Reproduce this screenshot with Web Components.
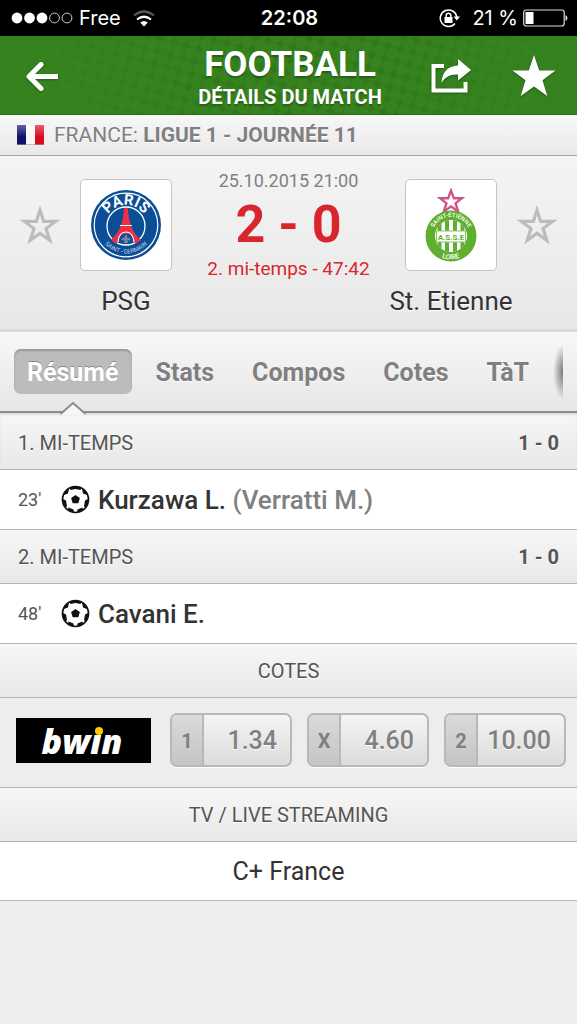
<!DOCTYPE html>
<html lang="fr">
<head>
<meta charset="UTF-8">
<meta name="viewport" content="width=device-width, initial-scale=1">
<title>Détails du match</title>
<style>
    body {
        margin: 0;
        min-height: 100vh;
        background: #eeeeee;
        color: #333333;
        font-family: Roboto, "Liberation Sans", sans-serif;
    }
</style>
</head>
<body>
<match-page></match-page>

<script>
// Styles communs à tous les composants
const base = `
    *, *::before, *::after { box-sizing: border-box; }
    :host { display: block; box-sizing: border-box; }
    button { margin: 0; padding: 0; border: 0; background: none; color: inherit; font: inherit; cursor: pointer; }
    svg { display: block; }
`;

class BaseElement extends HTMLElement {
    constructor() {
        super();
        this.attachShadow({ mode: 'open' });
    }

    connectedCallback() {
        this.shadowRoot.innerHTML = `<style>${base}${this.styles()}</style>${this.template()}`;
    }

    styles() {
        return '';
    }

    template() {
        return '<slot></slot>';
    }
}

class StatusBar extends BaseElement {
    styles() {
        return `
            :host {
                display: grid;
                grid-template-columns: 1fr auto 1fr;
                align-items: center;
                height: 36px;
                padding: 0 9px 0 11px;
                background: #000;
                color: #fff;
                font-family: Inter, Roboto, sans-serif;
                font-size: 20px;
                line-height: 36px;
            }
            .left, .right { display: flex; align-items: center; gap: 6px; }
            .right { justify-content: flex-end; gap: 5px; }
            .left svg:last-child { margin-left: 6px; }
            .right span { margin-left: 6px; white-space: nowrap; }
            time { font-weight: 600; }
        `;
    }

    template() {
        return `
            <div class="left">
                <svg width="62" height="12" viewBox="0 0 62 12" fill="#fff" aria-hidden="true">
                    <circle cx="6" cy="6" r="5.4"/><circle cx="18.5" cy="6" r="5.4"/><circle cx="31" cy="6" r="5.4"/>
                    <g fill="none" stroke="#ccc"><circle cx="43.5" cy="6" r="4.9"/><circle cx="56" cy="6" r="4.9"/></g>
                </svg>
                <span>Free</span>
                <svg width="22" height="17" viewBox="0 0 22 17" fill="none" stroke="#fff" stroke-width="2.2" aria-hidden="true">
                    <path d="M1 5.500Q11-2.500 21 5.500" stroke="#555"/>
                    <path d="M4 9.500Q11 4 18 9.500"/>
                    <path d="M7.200 12.600Q11 9.500 14.800 12.600L11 16.500Z" fill="#fff" stroke="none"/>
                </svg>
            </div>
            <time>22:08</time>
            <div class="right">
                <svg width="22" height="20" viewBox="0 0 22 20" fill="none" stroke="#fff" stroke-width="1.5" aria-hidden="true">
                    <path d="M16 15.500A8.300 8.300 0 1 1 17.800 9"/>
                    <path d="M14.500 8.500H21L17.800 12.500Z" fill="#fff" stroke="none"/>
                    <rect x="5.500" y="9" width="8" height="6" fill="#fff" stroke="none"/>
                    <path d="M7.200 9V7.500a2.300 2.300 0 0 1 4.600 0V9"/>
                </svg>
                <span>21 %</span>
                <svg width="45" height="18" viewBox="0 0 45 18" aria-hidden="true">
                    <rect x=".7" y="1" width="40.5" height="16" rx="2.5" fill="none" stroke="#ddd" stroke-width="1.2"/>
                    <rect x="2.5" y="3" width="8" height="12" fill="#fff"/>
                    <path d="M42.500 6q2 1 2 3t-2 3z" fill="#ddd"/>
                </svg>
            </div>
        `;
    }
}

class AppHeader extends BaseElement {
    styles() {
        return `
            :host {
                display: grid;
                grid-template-columns: 1fr auto 1fr;
                align-items: center;
                height: 79px;
                padding: 2px 21px 0 24px;
                background: #36831f;
                border-bottom: 1px solid #2b6c18;
                color: #fff;
                overflow: hidden;
                position: relative;
            }
            .dots { position: absolute; inset: 0; width: 100%; height: 100%; }
            .back, .title, .actions { position: relative; }
            .back { justify-self: start; }
            .title { text-align: center; text-shadow: 0 2px 1px rgba(0,0,0,0.25); }
            h1 { margin: 0; font-size: 35px; line-height: 41px; font-weight: 700; }
            h2 { margin: 0; font-size: 20px; line-height: 24px; font-weight: 700; }
            .actions { display: flex; justify-content: flex-end; align-items: center; gap: 40px; }
            .back svg, .actions svg { filter: drop-shadow(0 1px 1px rgba(0,0,0,0.3)); }
        `;
    }

    template() {
        return `
            <svg class="dots" aria-hidden="true">
                <defs>
                    <pattern id="halftone" width="13" height="13" patternUnits="userSpaceOnUse" patternTransform="rotate(15)">
                        <rect width="13" height="13" fill="#2a6d17"/>
                        <circle cx="6.5" cy="6.5" r="6.3" fill="#36831f"/>
                    </pattern>
                    <linearGradient id="fade">
                        <stop offset="0" stop-color="#fff" stop-opacity="0"/>
                        <stop offset=".42" stop-color="#fff" stop-opacity=".5"/>
                        <stop offset=".65" stop-color="#fff" stop-opacity=".5"/>
                        <stop offset="1" stop-color="#fff" stop-opacity="0"/>
                    </linearGradient>
                    <mask id="m"><rect width="100%" height="100%" fill="url(#fade)"/></mask>
                </defs>
                <rect width="100%" height="100%" fill="url(#halftone)" mask="url(#m)"/>
            </svg>
            <button class="back" aria-label="Retour">
                <svg width="36" height="32" viewBox="0 0 36 32" fill="none" stroke="#fff" stroke-width="5" stroke-linecap="round" stroke-linejoin="round">
                    <path d="M17 4.500L5 16.500L17 28.500"/><path d="M6 16.500H34" stroke-linecap="butt"/>
                </svg>
            </button>
            <div class="title">
                <h1>FOOTBALL</h1>
                <h2>DÉTAILS DU MATCH</h2>
            </div>
            <div class="actions">
                <button aria-label="Partager">
                    <svg width="42" height="36" viewBox="0 0 42 36">
                        <path d="M14 8H3.500V32.500H35.500V24" fill="none" stroke="#fff" stroke-width="4"/>
                        <path d="M28 1L41 12L28 22.500V16.500C20 16 15 19 11.500 25C12 14 18 8 28 7.500Z" fill="#fff"/>
                    </svg>
                </button>
                <button aria-label="Favori">
                    <svg width="44" height="42" viewBox="0 0 44 42" fill="#fff">
                        <path d="M22 0L27.200 15.500H43.500L30.500 25.200L35.300 41L22 31.500L8.700 41L13.500 25.200L.5 15.500H16.800Z"/>
                    </svg>
                </button>
            </div>
        `;
    }
}

class LeagueBar extends BaseElement {
    styles() {
        return `
            :host {
                display: flex;
                align-items: center;
                gap: 10px;
                height: 41px;
                padding: 0 17px;
                background: linear-gradient(#f7f7f7, #e9e9e9);
                border-bottom: 1px solid #aaaaaa;
                color: #808080;
                font-size: 21px;
                line-height: 24px;
                text-shadow: 0 1px 0 #fff;
            }
        `;
    }

    template() {
        return `
            <svg width="27" height="20" viewBox="0 0 27 20" aria-hidden="true">
                <defs><linearGradient id="g" x2="0" y2="1"><stop stop-color="#fff" stop-opacity=".35"/><stop offset=".6" stop-color="#fff" stop-opacity="0"/></linearGradient></defs>
                <rect width="9" height="20" fill="#10106e"/><rect x="9" width="9" height="20" fill="#f8f8f8"/>
                <rect x="18" width="9" height="20" fill="#d80a20"/><rect width="27" height="20" fill="url(#g)"/>
                <path d="M0 19.500H27" stroke="#999" stroke-opacity=".6"/>
            </svg>
            <span><slot></slot></span>
        `;
    }
}

class FavoriteStar extends BaseElement {
    styles() {
        return `
            :host { display: flex; align-items: center; justify-content: center; height: 92px; }
        `;
    }

    template() {
        return `
            <button aria-label="Ajouter aux favoris">
                <svg width="42" height="42" viewBox="0 0 42 42" fill="#bcbcbc" fill-rule="evenodd">
                    <path d="M21 1L25.800 15.700H41.500L28.900 25L33.800 40.500L21 31.200L8.200 40.500L13.100 25L.5 15.700H16.200ZM21 11L18.600 19H10L17 24L14.200 32.200L21 27.200L27.800 32.200L25 24L32 19H23.400Z"/>
                </svg>
            </button>
        `;
    }
}

class TeamCard extends BaseElement {
    styles() {
        return `
            :host { display: flex; flex-direction: column; align-items: center; gap: 14px; }
            .logo {
                display: flex;
                align-items: center;
                justify-content: center;
                width: 92px;
                height: 92px;
                background: #fff;
                border: 1px solid #c4c4c4;
                border-radius: 5px;
            }
            .name { font-size: 26px; line-height: 32px; white-space: nowrap; text-shadow: 0 1px 0 #fff; }
        `;
    }

    template() {
        return `
            <div class="logo"><slot name="logo"></slot></div>
            <div class="name"><slot></slot></div>
        `;
    }
}

class PsgLogo extends BaseElement {
    template() {
        return `
            <svg width="72" height="72" viewBox="0 0 72 72" font-family="Roboto, sans-serif">
                <defs>
                    <path id="top" d="M14 38A22 22 0 0 1 58 38"/>
                    <path id="bottom" d="M7.500 36A28.500 28.500 0 0 0 64.500 36"/>
                </defs>
                <circle cx="36" cy="36" r="35" fill="#0b4e96"/>
                <circle cx="36" cy="36" r="31.8" fill="none" stroke="#fff" stroke-width="1.2"/>
                <circle cx="36" cy="37" r="19" fill="#0b4e96" stroke="#fff" stroke-width="1.3"/>
                <path d="M34 19H38C38.500 34 43 45 51 51Q48 53.500 45 55Q44 44.500 36 44.500Q28 44.500 27 55Q23 53 21 50.500C29 44 33.500 34 34 19Z" fill="#ee3044"/>
                <path d="M30 36.500H42" stroke="#fff" stroke-width="1"/>
                <path d="M28 53Q29 43 36 43Q43 43 44 53" fill="none" stroke="#fff" stroke-width="1.2"/>
                <path d="M36 45.500Q38.500 48 37 50Q39 47.500 40.500 50Q40.500 52 37 51.500L38.500 54H33.500L35 51.500Q31.500 52 31.500 50Q33 47.500 35 50Q33.500 48 36 45.500Z" fill="#7a86a0"/>
                <text fill="#fff" font-size="15" font-weight="700" text-anchor="middle"><textPath href="#top" startOffset="50%">PARIS</textPath></text>
                <text fill="#c8d8ee" font-size="6" text-anchor="middle"><textPath href="#bottom" startOffset="50%">SAINT - GERMAIN</textPath></text>
            </svg>
        `;
    }
}

class AsseLogo extends BaseElement {
    template() {
        return `
            <svg width="54" height="74" viewBox="0 0 54 74" font-family="Roboto, sans-serif">
                <defs>
                    <path id="top" d="M8 48A19 19 0 0 1 46 48"/>
                    <path id="bottom" d="M3.500 48A23.500 23.500 0 0 0 50.500 48"/>
                    <clipPath id="c"><circle cx="27" cy="48" r="16"/></clipPath>
                </defs>
                <path d="M27 3.500L29.600 10.500H37L31.200 15.200L33.500 22.500L27 18L20.500 22.500L22.800 15.200L17 10.500H24.400Z" fill="#fff" stroke="#8f5aa6" stroke-width="3"/>
                <path d="M27 3.500L29.600 10.500H37L31.200 15.200L33.500 22.500L27 18L20.500 22.500L22.800 15.200L17 10.500H24.400Z" fill="#fff" stroke="#e8507c" stroke-width="1.8"/>
                <circle cx="27" cy="48" r="25.5" fill="#5fae2e"/>
                <circle cx="27" cy="48" r="16" fill="#fff"/>
                <path d="M15.500 30V66M23 30V66M31 30V66M38.500 30V66" stroke="#5fae2e" stroke-width="4" clip-path="url(#c)"/>
                <rect x="12.5" y="43" width="29" height="11" fill="#fff" stroke="#8cc567"/>
                <text x="27" y="51.5" fill="#5fae2e" font-size="8" font-weight="700" text-anchor="middle">A.S.S.E</text>
                <text fill="#fff" font-size="6" font-weight="500" text-anchor="middle"><textPath href="#top" startOffset="50%">SAINT-ETIENNE</textPath></text>
                <text fill="#fff" font-size="7" font-weight="500" text-anchor="middle"><textPath href="#bottom" startOffset="50%">LOIRE</textPath></text>
            </svg>
        `;
    }
}

class MatchSummary extends BaseElement {
    styles() {
        return `
            :host {
                display: grid;
                grid-template-columns: 80px 92px 1fr 92px 80px;
                align-items: start;
                height: 176px;
                padding-top: 23px;
                background: linear-gradient(#f4f4f4, #e8e8e8);
                border-bottom: 3px solid #dadada;
            }
            .center { text-align: center; margin-top: -10px; color: #d9262e; font-size: 19px; line-height: 24px; }
            .date { color: #808080; font-size: 18px; }
            .score { font-size: 52px; line-height: 64px; font-weight: 700; }
        `;
    }

    template() {
        return `
            <favorite-star></favorite-star>
            <team-card><psg-logo slot="logo"></psg-logo>PSG</team-card>
            <div class="center">
                <div class="date">25.10.2015 21:00</div>
                <div class="score">2 - 0</div>
                <div>2. mi-temps - 47:42</div>
            </div>
            <team-card><asse-logo slot="logo"></asse-logo>St. Etienne</team-card>
            <favorite-star></favorite-star>
        `;
    }
}

class TabNav extends BaseElement {
    styles() {
        return `
            :host {
                display: flex;
                align-items: center;
                justify-content: space-between;
                height: 81px;
                padding: 0 14px;
                background: linear-gradient(#f8f8f8, #e8e6e7);
                border-bottom: 2px solid #8c8a8b;
            }
            nav { display: flex; gap: 10px; }
            button {
                position: relative;
                height: 45px;
                padding: 0 13px;
                border-radius: 7px;
                color: #808080;
                font-size: 25px;
                line-height: 47px;
                font-weight: 700;
                text-shadow: 0 1px 0 #fff;
            }
            button + button { padding: 0 14px; }
            button[aria-selected="true"] {
                background: #bcbcbc;
                box-shadow: inset 0 2px 2px #999;
                color: #fff;
                text-shadow: 0 -1px 0 #888;
            }
            .caret { position: absolute; left: 50%; bottom: -21px; margin-left: -14px; }
            .more { width: 10px; height: 56px; background: radial-gradient(ellipse at right, #777, transparent 70%); }
        `;
    }

    template() {
        const tabs = this.getAttribute('tabs').split(',');
        const buttons = tabs.map((tab, i) => `
            <button role="tab" aria-selected="${i === 0}">${tab}${i === 0 ? `
                <svg class="caret" width="28" height="14" viewBox="0 0 28 14" aria-hidden="true">
                    <path d="M1 14L14 2L27 14Z" fill="#f6f6f6"/>
                    <path d="M1.500 13L14 2L26.500 13" fill="none" stroke="#8c8a8b" stroke-width="2"/>
                </svg>` : ''}</button>`).join('');
        return `<nav role="tablist">${buttons}</nav><div class="more"></div>`;
    }

    connectedCallback() {
        super.connectedCallback();
        const buttons = this.shadowRoot.querySelectorAll('button');
        buttons.forEach(button => {
            button.addEventListener('click', () => {
                const caret = this.shadowRoot.querySelector('.caret');
                buttons.forEach(b => b.setAttribute('aria-selected', b === button));
                button.appendChild(caret);
            });
        });
    }
}

class SectionTitle extends BaseElement {
    styles() {
        return `
            :host {
                display: flex;
                align-items: center;
                justify-content: space-between;
                height: 54px;
                padding: 0 18px;
                background: linear-gradient(#f7f7f7, #e8e8e8);
                border-bottom: 1px solid #b4b4b4;
                color: #555555;
                font-size: 20px;
                line-height: 24px;
                text-shadow: 0 1px 0 #fff;
            }
            :host([first]) { height: 57px; padding-top: 4px; box-shadow: inset 0 2px 2px #dddddd; }
            :host([center]) { justify-content: center; }
        `;
    }

    template() {
        return '<span><slot></slot></span><slot name="score"></slot>';
    }
}

class GoalRow extends BaseElement {
    styles() {
        return `
            :host {
                display: flex;
                align-items: center;
                height: 60px;
                padding: 0 18px;
                background: #fff;
                border-bottom: 1px solid #b4b4b4;
                font-size: 26px;
                line-height: 30px;
                font-weight: 500;
            }
            .minute { width: 43px; color: #555555; font-size: 18px; font-weight: 400; }
            .player { margin-left: 8px; }
            .assist { color: #808080; }
        `;
    }

    template() {
        const assist = this.getAttribute('assist');
        return `
            <span class="minute">${this.getAttribute('minute')}'</span>
            <svg width="29" height="29" viewBox="0 0 29 29" aria-label="But">
                <defs><clipPath id="ball"><circle cx="14.5" cy="14.5" r="13"/></clipPath></defs>
                <circle cx="14.5" cy="14.5" r="13" fill="#fff" stroke="#111" stroke-width="1.7"/>
                <g fill="#111" clip-path="url(#ball)">
                    <path d="M14.500 10L18.900 13L17.300 18.300H11.700L10.100 13Z"/>
                    <path d="M8 2L9.500 5L14.500 4L19.500 5L21 2V0H8Z"/>
                    <path d="M21 4L22 8.500L26 10L28 14V3Z"/><path d="M8 4L7 8.500L3 10L1 14V3Z"/>
                    <path d="M29 13L24 15.500L23 21L25.500 24L29 20Z"/><path d="M0 13L5 15.500L6 21L3.500 24L0 20Z"/>
                    <path d="M21.500 22.500L16.500 24.500L16 29H23Z"/><path d="M7.500 22.500L12.500 24.500L13 29H6Z"/>
                </g>
            </svg>
            <span class="player"><slot></slot>${assist ? ` <span class="assist">(${assist})</span>` : ''}</span>
        `;
    }
}

class OddButton extends BaseElement {
    styles() {
        return `
            :host { flex: 1; }
            button {
                display: flex;
                width: 100%;
                height: 54px;
                border: 2px solid #b8b8b8;
                border-radius: 7px;
                background: linear-gradient(#f4f4f4, #dddbdc);
                box-shadow: 0 1px 0 #fff;
                color: #808080;
                font-size: 25px;
                line-height: 52px;
                font-weight: 500;
                text-shadow: 0 1px 0 #fff;
                overflow: hidden;
            }
            .pick {
                width: 32px;
                height: 100%;
                border-right: 2px solid #b8b8b8;
                background: linear-gradient(#dadada, #c6c4c5);
                font-size: 20px;
                font-weight: 700;
                text-shadow: none;
            }
            .value { flex: 1; padding-right: 13px; text-align: right; }
        `;
    }

    template() {
        return `<button><span class="pick">${this.getAttribute('pick')}</span><span class="value"><slot></slot></span></button>`;
    }
}

class OddsRow extends BaseElement {
    styles() {
        return `
            :host {
                display: flex;
                align-items: center;
                gap: 19px;
                height: 90px;
                padding: 0 11px 5px 16px;
                background: #ededed;
                border-bottom: 1px solid #b4b4b4;
            }
            .odds { flex: 1; display: flex; gap: 15px; }
            a { color: #fff; background: #000; }
        `;
    }

    template() {
        return `
            <a href="#bwin" aria-label="bwin">
                <svg width="135" height="45" viewBox="0 0 135 45">
                    <text x="66" y="36" fill="#fff" font-family="'Open Sans', sans-serif" font-size="34" font-weight="800" font-style="italic" text-anchor="middle">bwin</text>
                    <rect x="78" y="8" width="10" height="9" fill="#000"/>
                    <circle cx="83" cy="13" r="4" fill="#ffcc00"/>
                </svg>
            </a>
            <div class="odds"><slot></slot></div>
        `;
    }
}

class ChannelRow extends BaseElement {
    styles() {
        return `
            :host {
                height: 59px;
                background: #fff;
                border-bottom: 1px solid #b4b4b4;
                font-size: 25px;
                line-height: 60px;
                text-align: center;
            }
        `;
    }
}

class MatchPage extends BaseElement {
    template() {
        return `
            <status-bar></status-bar>
            <app-header></app-header>
            <league-bar>FRANCE: <b>LIGUE 1 - JOURNÉE 11</b></league-bar>
            <match-summary></match-summary>
            <tab-nav tabs="Résumé,Stats,Compos,Cotes,TàT"></tab-nav>
            <section-title first>1. MI-TEMPS<b slot="score">1 - 0</b></section-title>
            <goal-row minute="23" assist="Verratti M.">Kurzawa L.</goal-row>
            <section-title>2. MI-TEMPS<b slot="score">1 - 0</b></section-title>
            <goal-row minute="48">Cavani E.</goal-row>
            <section-title center>COTES</section-title>
            <odds-row>
                <odd-button pick="1">1.34</odd-button>
                <odd-button pick="X">4.60</odd-button>
                <odd-button pick="2">10.00</odd-button>
            </odds-row>
            <section-title center>TV / LIVE STREAMING</section-title>
            <channel-row>C+ France</channel-row>
        `;
    }
}

customElements.define('status-bar', StatusBar);
customElements.define('app-header', AppHeader);
customElements.define('league-bar', LeagueBar);
customElements.define('favorite-star', FavoriteStar);
customElements.define('team-card', TeamCard);
customElements.define('psg-logo', PsgLogo);
customElements.define('asse-logo', AsseLogo);
customElements.define('match-summary', MatchSummary);
customElements.define('tab-nav', TabNav);
customElements.define('section-title', SectionTitle);
customElements.define('goal-row', GoalRow);
customElements.define('odd-button', OddButton);
customElements.define('odds-row', OddsRow);
customElements.define('channel-row', ChannelRow);
customElements.define('match-page', MatchPage);
</script>
</body>
</html>
